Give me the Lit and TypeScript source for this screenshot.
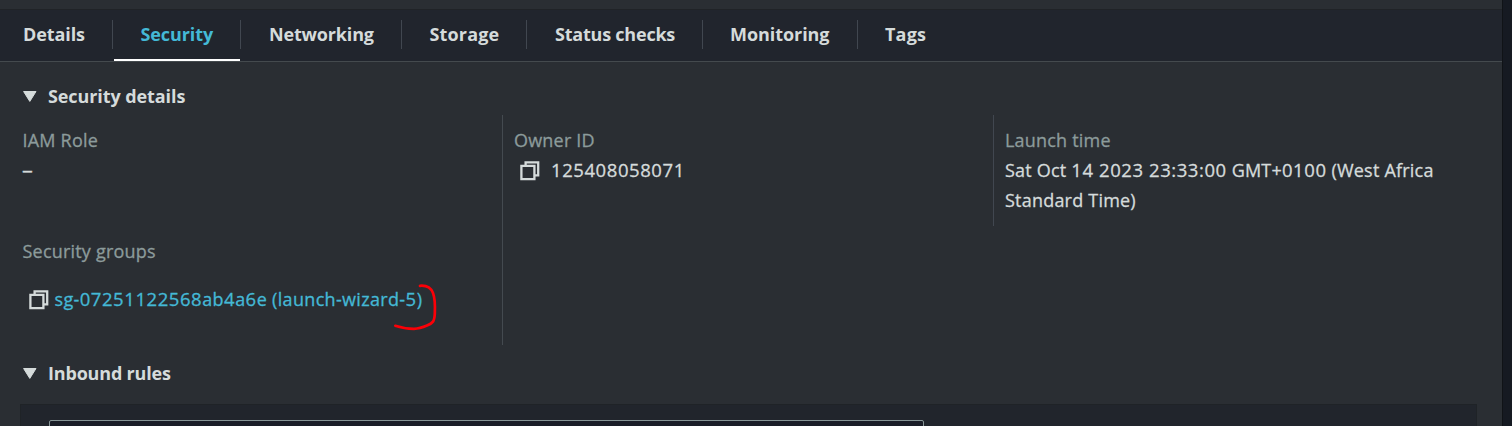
import { LitElement, html, svg, css } from "lit";
import { customElement, state } from "lit/decorators.js";
import { classMap } from "lit/directives/class-map.js";

const copyIcon = html`<svg class="copy" width="20" height="20" viewBox="0 0 20 20" fill="none" stroke="currentColor" stroke-width="2.3">
  ${svg`<path d="M1.4 4.8H14.4V18.2H1.4Z"/><path d="M5.6 4.5V1.4H18.2V14.4H15"/>`}
</svg>`;

const caret = html`<svg class="caret" width="15" height="12" viewBox="0 0 15 12" fill="currentColor" stroke="currentColor" stroke-linejoin="round">
  ${svg`<path d="M0.6 1.5H13L6.8 11.4Z"/>`}
</svg>`;

@customElement("app-root")
export class AppRoot extends LitElement {
  static styles = css`
    * { box-sizing: border-box; }
    :host {
      display: block;
      height: 426px;
      overflow: hidden;
      position: relative;
      font: 400 18px/30px "Open Sans", "Noto Sans", sans-serif;
      color: #d5dbdb;
      background: #16191f;
    }
    .page { display: flex; height: 100%; }
    .panel { flex: 1; display: flex; flex-direction: column; padding-top: 9px; background: #2a2e33; min-width: 0; }
    .rail { width: 10px; background: #161a22; border-left: 1px solid #101317; }
    .tabs { display: flex; flex: none; height: 53px; background: #21252d; border-top: 1px solid #202327; border-bottom: 1px solid #444a4e; }
    .tab { display: flex; flex-direction: column; font-weight: 700; white-space: nowrap; position: relative; }
    .tab .label { padding-top: 9px; height: 49px; }
    .tab:not(:last-child)::after { content: ""; position: absolute; right: 0; top: 10px; height: 29px; width: 1px; background: #414750; }
    .active { color: #44b9d6; }
    .active::before { content: ""; position: absolute; left: 1px; right: 1px; bottom: 0; height: 2px; background: #fff; }
    .details { width: 113px; padding-left: 23px; letter-spacing: -0.1px; }
    .security { width: 128px; padding-left: 27.5px; letter-spacing: -0.1px; }
    .networking { width: 161px; letter-spacing: -0.16px; padding-left: 28px; }
    .storage { width: 125px; letter-spacing: 0.15px; padding-left: 27.5px; }
    .status { width: 176px; letter-spacing: -0.22px; padding-left: 28px; }
    .monitoring { width: 155px; letter-spacing: -0.06px; padding-left: 27px; }
    .tags { letter-spacing: 0.18px; padding-left: 27px; }
    .heading { display: flex; align-items: center; flex: none; gap: 10px; height: 30px; padding-left: 23px; font-weight: 700; letter-spacing: -0.09px; }
    .first { margin-top: 19px; }
    .second { margin-top: 13px; letter-spacing: -0.18px; }
    .columns { display: grid; flex: none; grid-template-columns: 503px 491px 1fr; align-items: start; margin-top: 4px; height: 230px; -webkit-text-stroke: 0.3px currentColor; }
    .col { padding: 10px 0 0 11px; }
    .iam { height: 230px; padding-left: 22.5px; border-right: 1px solid #444a50; }
    .owner { height: 111px; border-right: 1px solid #414750; }
    .launch { white-space: nowrap; }
    .key { color: #8c9b9b; letter-spacing: 0.2px; }
    .key.narrow { letter-spacing: 0.2px; }
    .group { margin-top: 51px; }
    .value { letter-spacing: 0.21px; }
    .dash { display: inline-block; transform: translateX(-1px) scaleX(1.2); transform-origin: left; }
    .num { font-size: 18.5px; line-height: 1; letter-spacing: 0.57px; }
    .copyable { display: flex; align-items: center; gap: 11px; padding-left: 6px; height: 30px; }
    .copy { flex: none; margin-top: 1.5px; }
    .link { gap: 5.5px; margin-top: 18px; padding-left: 6.5px; white-space: nowrap; }
    .link a { color: #44b9d6; text-decoration: none; letter-spacing: 0.33px; }
    .rules { flex: 1; margin: 16px 25px 0 20px; padding: 15px 0 0 28px; background: #21252c; border: 1px solid #1f2327; border-bottom: 0; }
    .search { width: 875px; height: 40px; border: 1px solid #879596; border-radius: 2px; background: #1a1d27; }
    .mark { position: absolute; left: 390px; top: 280px; }
  `;

  @state() private current = "security";

  private tabs = [
    ["details", "Details"],
    ["security", "Security"],
    ["networking", "Networking"],
    ["storage", "Storage"],
    ["status", "Status checks"],
    ["monitoring", "Monitoring"],
    ["tags", "Tags"],
  ];

  render() {
    return html`
      <div class="page">
        <main class="panel">
          <nav class="tabs">
            ${this.tabs.map(([id, label]) => html`
              <div class=${classMap({ tab: true, [id]: true, active: id === this.current })} @click=${() => (this.current = id)}>
                <span class="label">${label}</span>
              </div>`)}
          </nav>
          <div class="heading first">${caret}<span>Security details</span></div>
          <section class="columns">
            <div class="col iam">
              <div class="key narrow">IAM Role</div>
              <div class="value"><span class="dash">–</span></div>
              <div class="key group">Security groups</div>
              <div class="copyable link">${copyIcon}<a class="value">sg-<span class="num">07251122568</span>ab<span class="num">4</span>a<span class="num">6</span>e (launch-wizard-<span class="num">5</span>)</a></div>
            </div>
            <div class="col owner">
              <div class="key narrow">Owner ID</div>
              <div class="copyable">${copyIcon}<span class="num">125408058071</span></div>
            </div>
            <div class="col launch">
              <div class="key">Launch time</div>
              <div class="value">Sat Oct <span class="num">14 2023 23:33:00</span> GMT+<span class="num">0100</span> (West Africa<br>Standard Time)</div>
            </div>
          </section>
          <div class="heading second">${caret}<span>Inbound rules</span></div>
          <div class="rules"><div class="search"></div></div>
        </main>
        <aside class="rail"></aside>
      </div>
      <svg class="mark" width="52" height="54" viewBox="390 280 52 54" fill="none" stroke="#fb0007" stroke-width="2.7" stroke-linecap="round" stroke-linejoin="round">
        <path d="M420 285.8C427 285.2 431 288 433 293C435.3 299 435.2 306 434.8 314C434.3 321.5 433 323 427 325.6C422 327.8 419 328.8 414 328.8C407 328.8 401 327.8 395.3 325.8"/>
      </svg>
    `;
  }
}
